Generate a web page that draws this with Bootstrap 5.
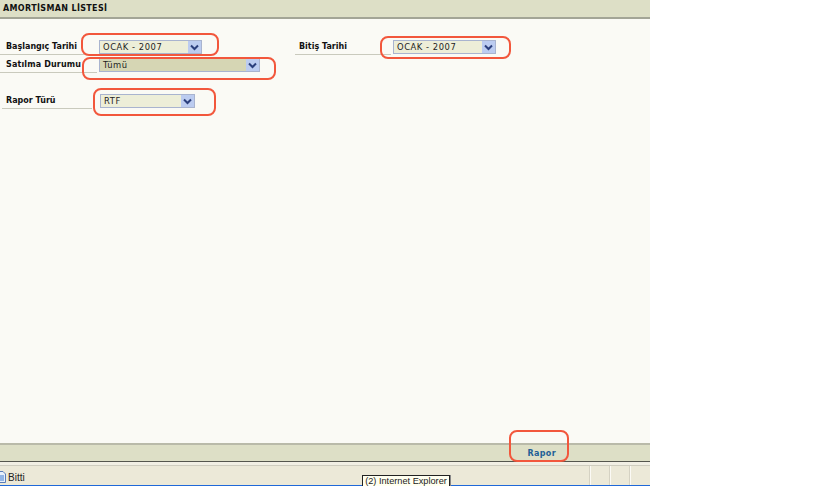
<!DOCTYPE html>
<html lang="tr">
<head>
<meta charset="utf-8">
<title>Amortisman Listesi</title>
<link href="https://cdn.jsdelivr.net/npm/bootstrap@5.3.0/dist/css/bootstrap.min.css" rel="stylesheet">
<style>
html,body{height:486px;overflow:hidden;background:#fff;margin:0}
.shot{position:relative;width:650px;height:486px;font-family:"DejaVu Sans",Verdana,sans-serif;color:#111}
.head-bar{height:19px;background:#dddfc6;border-bottom:2px solid #a3a596;padding:0 3px;font-size:8px;font-weight:700;letter-spacing:.35px;line-height:18px}
.form-zone{height:424px;background:#fafaf5;padding-top:20px}
.field-row{height:18px;display:flex}
.field-row.spaced{margin-top:18px}
.fld{display:flex;align-items:flex-start}
.lab{font-size:8px;font-weight:700;height:16px;line-height:15px;border-bottom:1px solid #c9cabd;padding-left:6px;white-space:nowrap}
.lab.wide{letter-spacing:.15px}
.w-a{width:97px}
.w-b{width:90px;margin-left:2px;padding-left:4px}
.w-c{width:96px;margin-left:93px;padding-left:4px}
.pick{margin-left:2px;height:14px;margin-top:1px;border:1px solid #a9b4cf;background:#edeed8;display:flex;font-size:8.4px;letter-spacing:.55px;line-height:12px;padding-left:3px;color:#222}
.pick.solid{background:#d6d6b4;width:161px;letter-spacing:.4px}
.pick.p1{width:103px}
.pick.p3{width:95px}
.pick .txt{flex:1}
.arrow{width:13px;height:12px;background:#bcccf0;display:flex;align-items:center;justify-content:center;flex:none}
.foot-bar{height:19px;background:#dddfc6;border-top:2px solid #b9baa9;border-bottom:1px solid #55564e;display:flex;justify-content:flex-end;padding-right:94px;font-size:8px;font-weight:700;letter-spacing:.35px;line-height:18px;color:#1f5f96}
.gap-strip{height:4px;background:#f1efe4;border-bottom:1px solid #cfcdbf}
.status{height:19px;padding-top:3px;background:#ece9d8;display:flex;align-items:center;font-family:"Liberation Sans",sans-serif;font-size:10px;color:#222}
.status svg{margin-right:2px}
.cells{margin-left:auto;display:flex;height:19px;margin-top:-3px}
.cells i{width:20px;border-left:1px solid #fbfaf5;box-shadow:-1px 0 0 #d5d2c3}
.xp-blue{height:1px;background:#1f68d8}
.tip{position:absolute;left:362px;top:475px;width:88px;height:11px;background:#fffff0;border:1px solid #222;border-bottom:0;font-family:"Liberation Sans",sans-serif;font-size:9.2px;line-height:11px;text-align:center;white-space:nowrap;color:#222;box-shadow:1px 0 0 #888}
.ring{position:absolute;border:2px solid #f2573c;border-radius:8px;pointer-events:none}
.r1{left:81px;top:33px;width:138px;height:23px}
.r2{left:82px;top:57px;width:194px;height:23px}
.r3{left:93px;top:88px;width:123px;height:28px}
.r4{left:380px;top:36px;width:131px;height:23px}
.r5{left:509px;top:430px;width:60px;height:32px}
</style>
</head>
<body>
<div class="shot">
  <div class="head-bar">AMORTİSMAN LİSTESİ</div>
  <div class="form-zone">
    <div class="field-row">
      <div class="fld">
        <div class="lab w-a">Başlangıç Tarihi</div>
        <div class="pick p1"><span class="txt">OCAK - 2007</span><span class="arrow"><svg width="9" height="7" viewBox="0 0 9 7"><path d="M1 1.5 4.5 5 8 1.5" fill="none" stroke="#2b3f7c" stroke-width="2"/></svg></span></div>
      </div>
      <div class="fld">
        <div class="lab w-c">Bitiş Tarihi</div>
        <div class="pick p1"><span class="txt">OCAK - 2007</span><span class="arrow"><svg width="9" height="7" viewBox="0 0 9 7"><path d="M1 1.5 4.5 5 8 1.5" fill="none" stroke="#2b3f7c" stroke-width="2"/></svg></span></div>
      </div>
    </div>
    <div class="field-row">
      <div class="fld">
        <div class="lab w-a wide">Satılma Durumu</div>
        <div class="pick solid"><span class="txt">Tümü</span><span class="arrow"><svg width="9" height="7" viewBox="0 0 9 7"><path d="M1 1.5 4.5 5 8 1.5" fill="none" stroke="#2b3f7c" stroke-width="2"/></svg></span></div>
      </div>
    </div>
    <div class="field-row spaced">
      <div class="fld">
        <div class="lab w-b">Rapor Türü</div>
        <div class="pick p3 ms-2"><span class="txt">RTF</span><span class="arrow"><svg width="9" height="7" viewBox="0 0 9 7"><path d="M1 1.5 4.5 5 8 1.5" fill="none" stroke="#2b3f7c" stroke-width="2"/></svg></span></div>
      </div>
    </div>
  </div>
  <div class="foot-bar"><span>Rapor</span></div>
  <div class="gap-strip"></div>
  <div class="status">
    <svg width="6" height="12" viewBox="0 0 6 12"><path d="M-3 .5H3L5.500 3V11.500H-3Z" fill="#e8f0fb" stroke="#5a7db8"/><path d="M-1 5H4M-1 7H4M-1 9H4" stroke="#3d7bd0"/></svg>
    <span>Bitti</span>
    <div class="cells"><i></i><i></i><i></i></div>
  </div>
  <div class="xp-blue"></div>
  <div class="tip">(2) Internet Explorer</div>
  <div class="ring r1"></div>
  <div class="ring r2"></div>
  <div class="ring r3"></div>
  <div class="ring r4"></div>
  <div class="ring r5"></div>
</div>
<script src="https://cdn.jsdelivr.net/npm/bootstrap@5.3.0/dist/js/bootstrap.bundle.min.js"></script>
</body>
</html>
